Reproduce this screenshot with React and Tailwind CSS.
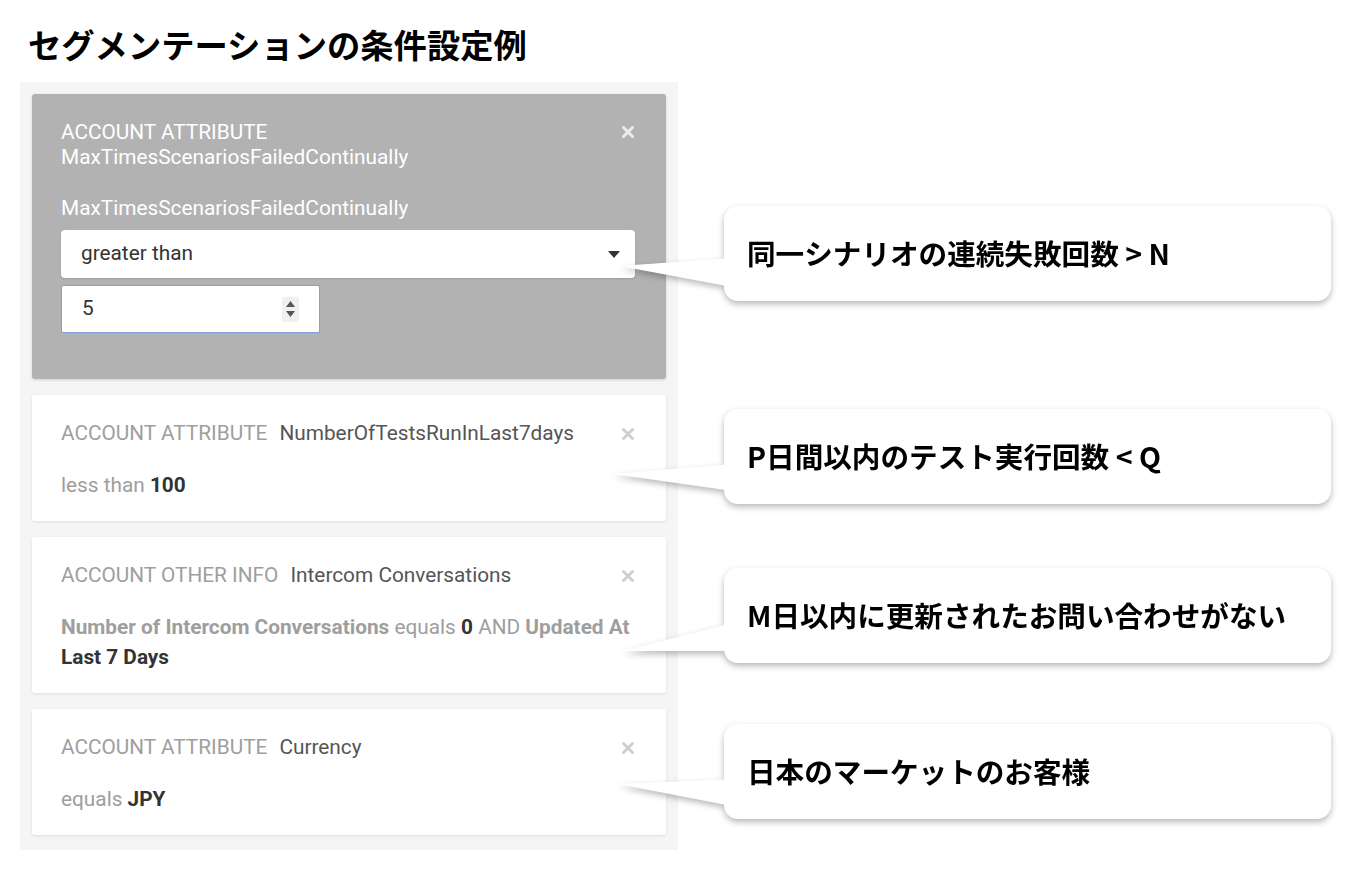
import React from "react";

const CloseIcon = ({ light }) => (
  <svg width="14" height="14" viewBox="0 0 14 14" className="shrink-0">
    <path
      d="M2.5 2.5 L11.5 11.5 M11.5 2.5 L2.5 11.5"
      stroke={light ? "#ececec" : "#cfcfcf"}
      strokeWidth="3"
      strokeLinecap="round"
    />
  </svg>
);

const Card = ({ kind, name, children }) => (
  <div className="bg-white rounded-[3px] shadow-[0_1px_3px_rgba(0,0,0,0.10)] pl-[29px] pr-[31px] pt-[26px] pb-[21px]">
    <div className="flex items-center justify-between leading-[25px]">
      <div>
        <span className="text-[#9e9e9e] mr-3">{kind}</span>
        <span className="text-[#555]">{name}</span>
      </div>
      <CloseIcon />
    </div>
    <div className="mt-6 leading-[30px] text-[#9e9e9e]">{children}</div>
  </div>
);

// tail = [tipX, tipY, topY, bottomY] relative to the callout box
const Callout = ({ text, tail, className }) => (
  <div className={"relative [filter:drop-shadow(0_3px_3px_rgba(0,0,0,0.28))] " + className}>
    <svg
      width="120"
      height="100"
      viewBox="0 0 120 100"
      className="absolute left-[-115px] top-0"
    >
      <polygon
        points={`${tail[0] + 115},${tail[1]} 123,${tail[2]} 123,${tail[3]}`}
        fill="#fff"
      />
    </svg>
    <div className="relative h-[95px] w-[607px] bg-white rounded-[14px] flex items-center pl-[23px] text-[28.6px] font-bold text-black">
      {text}
    </div>
  </div>
);

export default function App() {
  return (
    <div
      className="min-h-[870px] bg-white pt-[24px] pl-[20px]"
      style={{ fontFamily: "Roboto, 'Noto Sans CJK JP', sans-serif" }}
    >
      <h1
        className="ml-2 text-[33.3px] leading-[40px] font-bold text-black"
        style={{ fontFamily: "'Noto Sans CJK JP', sans-serif" }}
      >
        セグメンテーションの条件設定例
      </h1>

      <div className="mt-[18px] flex items-start gap-[46px]">
        {/* conditions */}
        <div className="w-[658px] bg-[#f5f5f5] px-3 pt-3 pb-[15px] flex flex-col gap-4 text-[20.8px]">
          <div className="bg-[#b2b2b2] rounded-[3px] shadow-[0_1px_3px_rgba(0,0,0,0.15)] pl-[29px] pr-[31px] pt-[26px] pb-[46px] text-white">
            <div className="flex justify-between leading-[25px]">
              <div>
                <div>ACCOUNT ATTRIBUTE</div>
                <div>MaxTimesScenariosFailedContinually</div>
              </div>
              <div className="pt-[5px]">
                <CloseIcon light />
              </div>
            </div>
            <div className="mt-[26px] leading-[25px]">MaxTimesScenariosFailedContinually</div>
            <div className="mt-[9px] h-12 bg-white rounded-[4px] shadow-[0_1px_2px_rgba(0,0,0,0.12)] flex items-center justify-between pl-5 pr-[15px] text-[#333]">
              <span>greater than</span>
              <svg width="12" height="7" viewBox="0 0 12 7">
                <polygon points="0,0 12,0 6,7" fill="#333" />
              </svg>
            </div>
            <div className="mt-[7px] h-12 w-[259px] bg-white rounded-[2px] border border-[#7f9fd6] flex items-center justify-between pl-5 pr-[20px] text-[#333]">
              <span>5</span>
              <div className="w-[17px] h-[25px] rounded-[3px] bg-[#f0f0f0] flex flex-col items-center justify-center gap-[4px]">
                <svg width="9" height="6" viewBox="0 0 9 6">
                  <polygon points="4.5,0 9,6 0,6" fill="#555" />
                </svg>
                <svg width="9" height="6" viewBox="0 0 9 6">
                  <polygon points="0,0 9,0 4.5,6" fill="#555" />
                </svg>
              </div>
            </div>
          </div>

          <Card kind="ACCOUNT ATTRIBUTE" name="NumberOfTestsRunInLast7days">
            less than <span className="font-bold text-[#333]">100</span>
          </Card>

          <Card kind="ACCOUNT OTHER INFO" name="Intercom Conversations">
            <span className="font-bold">Number of Intercom Conversations</span> equals{" "}
            <span className="font-bold text-[#333]">0</span> AND{" "}
            <span className="font-bold">Updated At</span>
            <br />
            <span className="font-bold text-[#333]">Last 7 Days</span>
          </Card>

          <Card kind="ACCOUNT ATTRIBUTE" name="Currency">
            equals <span className="font-bold text-[#333]">JPY</span>
          </Card>
        </div>

        {/* annotations */}
        <div
          className="pt-[124px] flex flex-col"
          style={{ fontFamily: "'Noto Sans CJK JP', sans-serif" }}
        >
          <Callout text="同一シナリオの連続失敗回数 > N" tail={[-104, 60, 52, 81]} />
          <Callout className="mt-[108px]" text="P日間以内のテスト実行回数 < Q" tail={[-111, 65, 55, 82]} />
          <Callout className="mt-[64px]" text="M日以内に更新されたお問い合わせがない" tail={[-101, 83, 55, 83]} />
          <Callout className="mt-[61px]" text="日本のマーケットのお客様" tail={[-106, 60, 55, 82]} />
        </div>
      </div>
    </div>
  );
}
